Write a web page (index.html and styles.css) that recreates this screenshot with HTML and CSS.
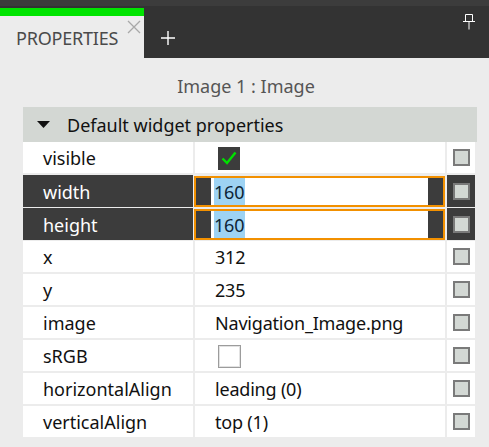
FILE: index.html
```html
<!DOCTYPE html>
<html>
<head>
<meta charset="utf-8">
<link rel="stylesheet" href="styles.css">
</head>
<body>
<div class="topbar">
  <div class="tab">
    <div class="tab-accent"></div>
    <div class="tab-body">
      <span class="tab-label">PROPERTIES</span>
      <svg class="tab-close" width="14" height="14" viewBox="0 0 14 14"><path d="M1 1 L13 13 M13 1 L1 13" stroke="#a8a8a8" stroke-width="1.3" fill="none"/></svg>
    </div>
  </div>
  <div class="add">
    <svg width="14" height="14" viewBox="0 0 14 14"><path d="M7 0 V14 M0 7 H14" stroke="#ffffff" stroke-width="1.4" fill="none"/></svg>
  </div>
  <div class="spacer"></div>
  <div class="pin">
    <svg width="12" height="16" viewBox="0 0 12 16"><path d="M2.5 0.5 H9.5 V7.5 H2.5 Z M0 7.5 H12 M6 7.5 V15.5" stroke="#ffffff" stroke-width="1" fill="none"/></svg>
  </div>
</div>

<div class="title">Image 1 : Image</div>

<div class="table">
  <div class="group-head">
    <svg class="tri" width="13" height="8" viewBox="0 0 13 8"><path d="M0 0 H13 L6.5 7 Z" fill="#111"/></svg>
    <span>Default widget properties</span>
  </div>
  <div class="rows">
    <div class="row">
      <div class="cell name">visible</div>
      <div class="cell value"><span class="check-on"><svg width="16" height="14" viewBox="0 0 16 14"><path d="M1.5 7.5 L6 12 L14.5 1.5" stroke="#00e000" stroke-width="2.4" fill="none"/></svg></span></div>
      <div class="cell box"><span class="cb"></span></div>
    </div>
    <div class="row sel">
      <div class="cell name">width</div>
      <div class="cell value edit"><span class="edit-in"><span class="hl">160</span></span></div>
      <div class="cell box"><span class="cb"></span></div>
    </div>
    <div class="row sel">
      <div class="cell name">height</div>
      <div class="cell value edit"><span class="edit-in"><span class="hl">160</span></span></div>
      <div class="cell box"><span class="cb"></span></div>
    </div>
    <div class="row">
      <div class="cell name">x</div>
      <div class="cell value">312</div>
      <div class="cell box"><span class="cb"></span></div>
    </div>
    <div class="row">
      <div class="cell name">y</div>
      <div class="cell value">235</div>
      <div class="cell box"><span class="cb"></span></div>
    </div>
    <div class="row">
      <div class="cell name">image</div>
      <div class="cell value">Navigation_Image.png</div>
      <div class="cell box"><span class="cb"></span></div>
    </div>
    <div class="row">
      <div class="cell name">sRGB</div>
      <div class="cell value"><span class="check-off"></span></div>
      <div class="cell box"><span class="cb"></span></div>
    </div>
    <div class="row">
      <div class="cell name">horizontalAlign</div>
      <div class="cell value">leading (0)</div>
      <div class="cell box"><span class="cb"></span></div>
    </div>
    <div class="row">
      <div class="cell name">verticalAlign</div>
      <div class="cell value">top (1)</div>
      <div class="cell box"><span class="cb"></span></div>
    </div>
  </div>
</div>
</body>
</html>
```

FILE: styles.css
```css
* { box-sizing: border-box; }
html, body { margin: 0; padding: 0; }
body {
  background: #ececec;
  font-family: "Noto Sans", "Open Sans", sans-serif;
  font-size: 18px;
  color: #111;
  width: 489px;
  height: 447px;
  overflow: hidden;
}
.topbar {
  display: flex;
  align-items: flex-end;
  height: 58px;
  background: #333333;
  border-top: 6px solid #3c3c3c;
}
.tab {
  width: 144px;
  height: 50px;
  display: flex;
  flex-direction: column;
}
.tab-accent { height: 8px; background: #00e400; }
.tab-body {
  flex: 1;
  background: #ececec;
  position: relative;
  padding-left: 16px;
  display: flex;
  align-items: center;
  padding-top: 2px;
}
.tab-label { color: #4a4a4a; letter-spacing: -0.2px; }
.tab-close { position: absolute; left: 127px; top: 4px; }
.add {
  width: 48px;
  height: 42px;
  display: flex;
  align-items: center;
  justify-content: center;
  padding-top: 2px;
}
.spacer { flex: 1; }
.pin {
  align-self: flex-start;
  margin-top: 8px;
  margin-right: 14px;
}
.pin svg { display: block; }
.title {
  height: 49px;
  display: flex;
  align-items: center;
  justify-content: center;
  color: #555;
  padding-left: 3px;
  padding-top: 7px;
}
.table {
  margin-left: 23px;
  width: 454px;
}
.group-head {
  height: 35px;
  background: #d3d7d3;
  display: flex;
  align-items: center;
  padding-left: 14px;
  gap: 17px;
}
.group-head .tri { margin-top: 1px; }
.rows {
  display: flex;
  flex-direction: column;
  gap: 2px;
  width: 452px;
}
.row {
  display: grid;
  grid-template-columns: 170px 250px 28px;
  column-gap: 2px;
  height: 31px;
}
.cell {
  background: #ffffff;
  display: flex;
  align-items: center;
  padding-top: 1px;
  white-space: nowrap;
}
.name { padding-left: 20px; }
.value { padding-left: 20px; letter-spacing: -0.2px; }
.box { justify-content: center; padding-top: 0; }
.cb {
  width: 17px;
  height: 17px;
  border: 2px solid #7a7a7a;
  background: #d3d8d4;
}
.sel .name { background: #3c3c3c; color: #ffffff; }
.sel .box { background: #3c3c3c; }
.edit {
  padding: 0;
  border: 2px solid #f29000;
  background: #3c3c3c;
  margin-left: -1px;
  margin-top: 1px;
  height: 31px;
}
.edit-in {
  display: flex;
  align-items: center;
  height: 100%;
  margin-left: 15px;
  margin-right: 15px;
  flex: 1;
  background: #ffffff;
  padding-left: 3px;
}
.hl {
  background: #9ed3f3;
  color: #0d2436;
  height: 100%;
  display: flex;
  align-items: center;
  padding-right: 1px;
  padding-top: 1px;
}
.check-on {
  width: 22px;
  height: 23px;
  background: #3c3c3c;
  display: flex;
  align-items: center;
  justify-content: center;
  margin-left: 3px;
}
.check-off {
  width: 23px;
  height: 23px;
  border: 1px solid #9c9c9c;
  box-shadow: inset 0 0 0 1px #e2e2e2;
  background: #ffffff;
  margin-left: 3px;
}
```
